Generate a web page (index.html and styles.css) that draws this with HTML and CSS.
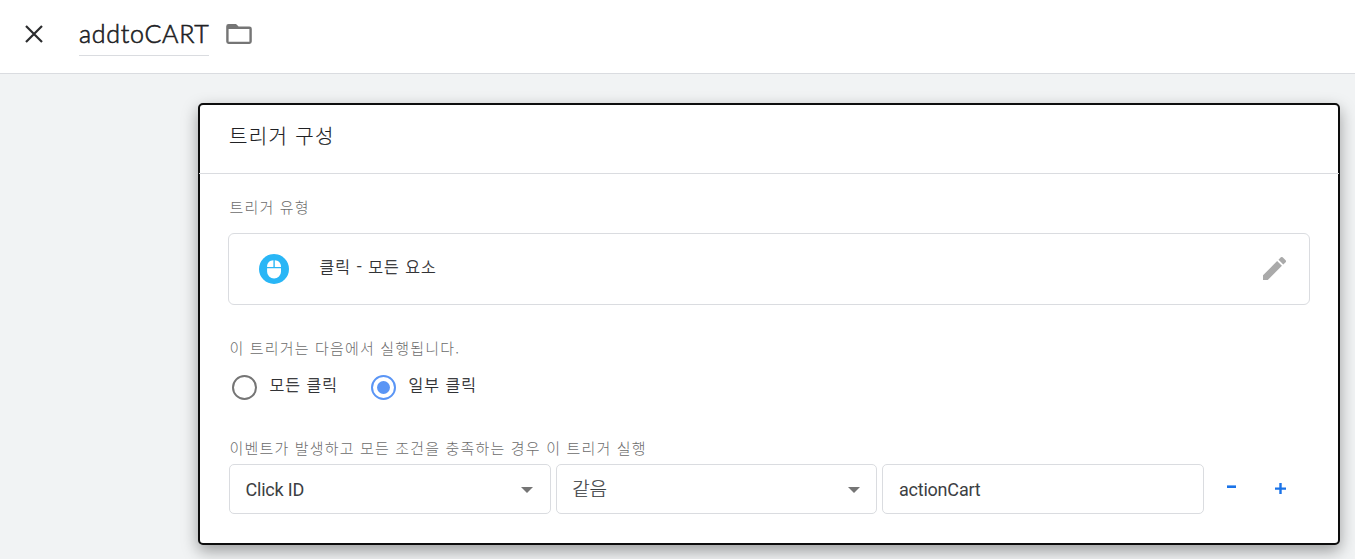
FILE: index.html
```html
<!DOCTYPE html>
<html lang="ko">
<head>
<meta charset="utf-8">
<title>addtoCART</title>
<link rel="stylesheet" href="styles.css">
</head>
<body>
<header class="topbar">
  <svg class="close" width="18" height="18" viewBox="0 0 18 18"><path d="M1 1L17 17M17 1L1 17" fill="none" stroke="#2b2c2e" stroke-width="2.2"/></svg>
  <div class="name"><span>addtoCART</span></div>
  <svg class="folder" width="26" height="20" viewBox="0 0 26 20"><path fill="#757575" fill-rule="evenodd" d="M2.6 0H10l2.6 2.4H23.4A2.4 2.4 0 0 1 25.8 4.8V17.6A2.4 2.4 0 0 1 23.4 20H2.6A2.4 2.4 0 0 1 .2 17.6V2.4A2.4 2.4 0 0 1 2.6 0ZM2.6 5V17.7H23.4V5Z"/></svg>
</header>
<main class="card">
  <h1 class="card-title"><span>트리거 구성</span></h1>
  <section class="content">
    <div class="label type-label"><span>트리거 유형</span></div>
    <div class="type">
      <svg width="30" height="30" viewBox="0 0 30 30"><circle cx="15" cy="15" r="15" fill="#29b6f6"/><path fill="#fff" d="M14.4 6.2V13H8.1V12.5C8.1 9 10.8 6.3 14.4 6.2ZM15.8 6.2C19.3 6.3 22 9 22 12.5V13H15.8ZM8.1 14.3H22V17.7A6.95 6.9 0 0 1 8.1 17.7Z"/></svg>
      <span class="type-name">클릭 - 모든 요소</span>
      <svg class="pencil" width="23" height="23" viewBox="3 3 18 18"><path fill="#aaa" d="M3 17.25V21h3.75L17.81 9.94l-3.75-3.75L3 17.25zM20.71 7.04a1 1 0 0 0 0-1.41l-2.34-2.34a1 1 0 0 0-1.41 0l-1.83 1.83 3.75 3.75 1.83-1.83z"/></svg>
    </div>
    <div class="label fires-label"><span>이 트리거는 다음에서 실행됩니다.</span></div>
    <div class="radios">
      <div class="radio"><i class="ring"></i><span>모든 클릭</span></div>
      <div class="radio on"><i class="ring"></i><span>일부 클릭</span></div>
    </div>
    <div class="label cond-label"><span>이벤트가 발생하고 모든 조건을 충족하는 경우 이 트리거 실행</span></div>
    <div class="conditions">
      <div class="field"><span>Click ID</span><i class="caret"></i></div>
      <div class="field"><span class="ko">같음</span><i class="caret"></i></div>
      <div class="field"><span>actionCart</span></div>
      <svg class="minus" width="9" height="3" viewBox="0 0 9 3"><path fill="#1a73e8" d="M0 .4H9V3H0Z"/></svg>
      <svg class="plus" width="11" height="11" viewBox="0 0 11 11"><path fill="#1a73e8" d="M4.3 0h2.4v4.5H11v2.2H6.7V11H4.3V6.7H0V4.5h4.3Z"/></svg>
    </div>
  </section>
</main>
</body>
</html>
```
FILE: styles.css
```css
* { box-sizing: border-box; }
html, body { height: 100%; }
body {
  margin: 0;
  overflow: hidden;
  background: #f1f3f4;
  color: #202124;
  font-family: Roboto, "Noto Sans CJK KR", sans-serif;
}
svg { display: block; flex: none; }
.topbar {
  display: flex;
  height: 74px;
  padding-left: 25px;
  background: #fff;
  border-bottom: 1px solid #dadce0;
}
.close { margin-top: 25px; }
.name {
  width: 130px;
  height: 42px;
  margin: 14px 0 0 36px;
  border-bottom: 1px solid #dadce0;
  font: 300 25px/39px Lato, sans-serif;
  letter-spacing: .7px;
  -webkit-text-stroke: .6px #202124;
  white-space: nowrap;
}
.folder { margin: 24px 0 0 17px; }
.card {
  width: 1142px;
  height: 442px;
  margin: 29px 0 0 198px;
  background: #fff;
  border: 2px solid #0d0d0d;
  border-radius: 5px;
  box-shadow: 0 6px 16px rgba(0, 0, 0, .36);
  font-family: "Noto Sans CJK KR", sans-serif;
  font-weight: 300;
  white-space: nowrap;
}
.card-title {
  height: 69px;
  margin: 0 -1px;
  padding-left: 30px;
  border-bottom: 1px solid #dadce0;
  font-size: 20px;
  font-weight: 300;
  line-height: 61px;
  letter-spacing: 1.35px;
  -webkit-text-stroke: .15px #202124;
}
.content { padding: 0 28px; }
.label {
  height: 20px;
  padding-left: 1.5px;
  color: #6c6c6c;
  font-size: 15px;
  line-height: 20px;
  letter-spacing: 1.17px;
}
.type-label { margin-top: 23px; }
.type {
  display: flex;
  align-items: center;
  height: 72px;
  margin-top: 16px;
  padding: 0 23.5px 0 30px;
  border: 1px solid #dadce0;
  border-radius: 6px;
}
.type-name {
  margin: -6px 0 0 30.5px;
  font-size: 16px;
  letter-spacing: 1px;
  -webkit-text-stroke: .25px #202124;
}
.pencil { margin: -1px 0 0 auto; }
.fires-label { margin-top: 33px; }
.radios { display: flex; height: 26px; margin: 16px 0 0 4px; }
.radio { display: flex; width: 139px; }
.radio span {
  margin-left: 12.5px;
  font-size: 16px;
  line-height: 20px;
  letter-spacing: 1px;
  -webkit-text-stroke: .25px #202124;
}
.ring {
  display: flex;
  align-items: center;
  justify-content: center;
  width: 25px;
  height: 25px;
  margin-top: 1px;
  border: 2px solid #757575;
  border-radius: 50%;
}
.on .ring { border-color: #5a95f5; }
.on .ring::after {
  content: "";
  width: 13px;
  height: 13px;
  background: #5a95f5;
  border-radius: 50%;
}
.cond-label { margin-top: 38px; }
.conditions { display: flex; align-items: flex-start; gap: 5px; margin: 6px 0 0 1px; }
.field {
  display: flex;
  align-items: center;
  justify-content: space-between;
  width: 321.7px;
  height: 50px;
  padding: 0 16.5px 0 15.5px;
  border: 1px solid #dadce0;
  border-radius: 5px;
  color: #3c4043;
  font-family: Roboto, sans-serif;
  font-size: 18px;
  font-weight: 400;
  letter-spacing: -.2px;
}
.ko {
  margin-top: -3px;
  font-family: "Noto Sans CJK KR", sans-serif;
  font-weight: 300;
  font-size: 19px;
  -webkit-text-stroke: .2px #3c4043;
}
.caret {
  margin-top: 1px;
  border: 6.5px solid transparent;
  border-top: 6.5px solid #757575;
  border-bottom: 0;
}
.minus { margin: 21px 0 0 18px; }
.plus { margin: 19px 0 0 34px; }
```
